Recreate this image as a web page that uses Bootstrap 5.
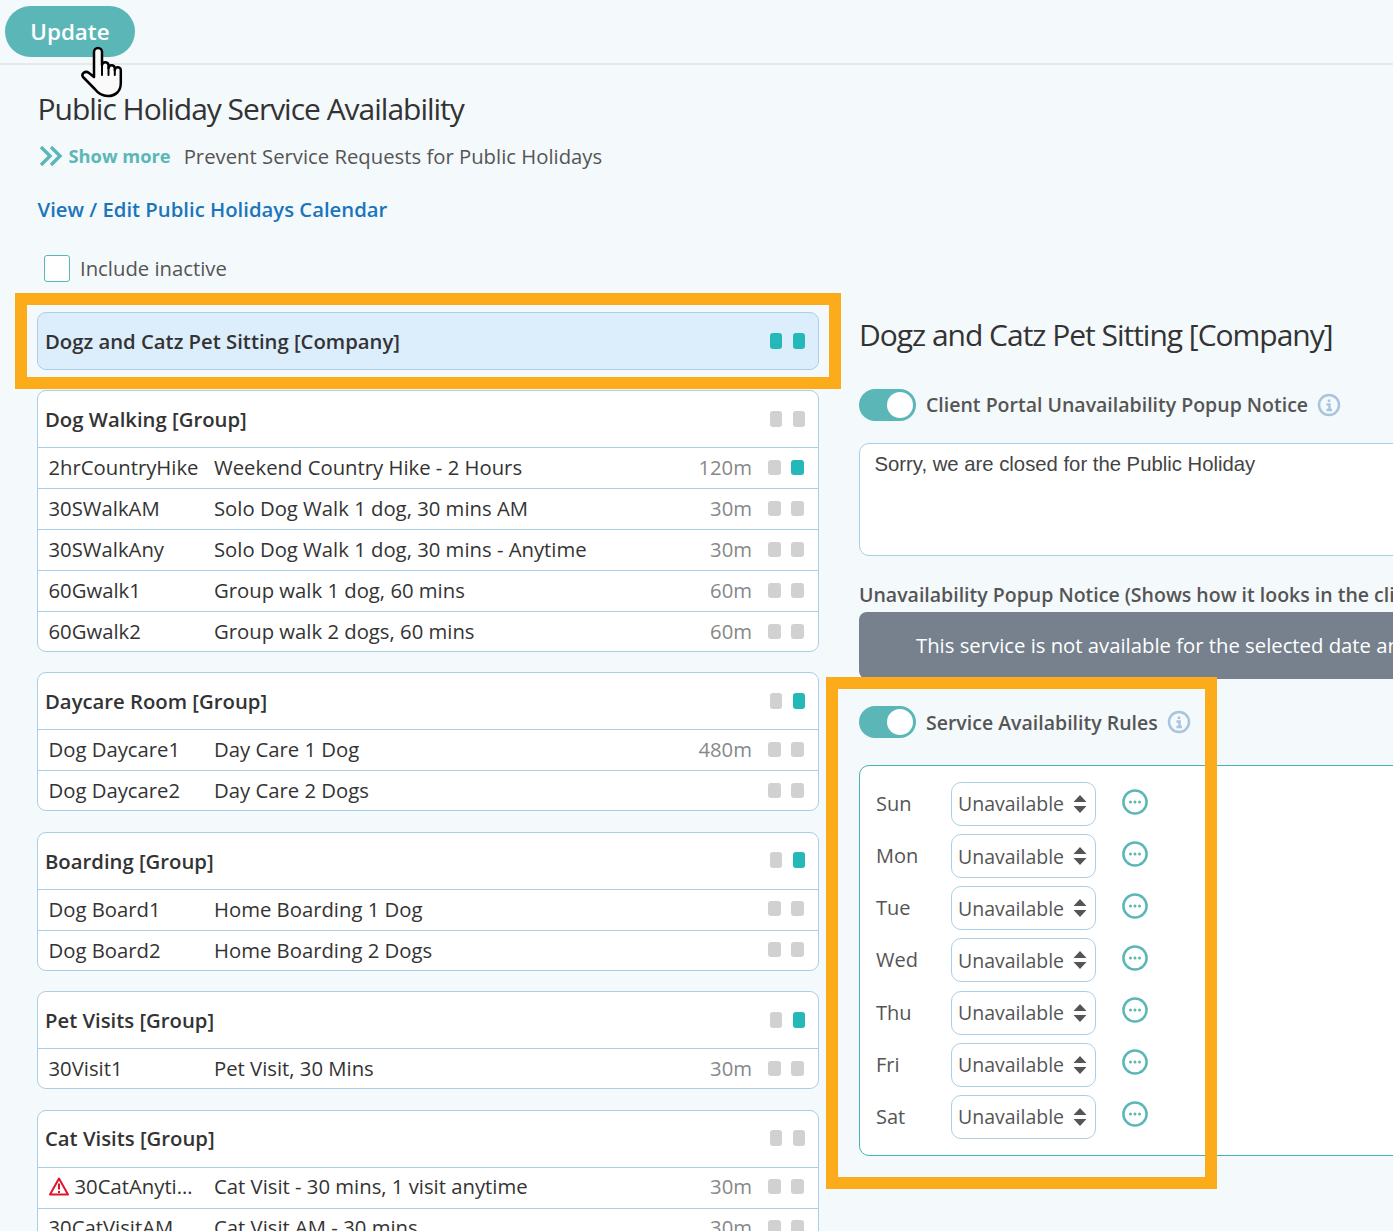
<!DOCTYPE html>
<html lang="en"><head><meta charset="utf-8"><title>Public Holiday Service Availability</title>
<link href="https://cdn.jsdelivr.net/npm/bootstrap@5.3.0/dist/css/bootstrap.min.css" rel="stylesheet">
<style>
html,body{height:1231px;overflow:hidden}
body{background:#f4f9fc;font-family:"Open Sans",sans-serif;font-size:20.3px;color:#555;position:relative}
.topbar{height:65px;border-bottom:2px solid #e6e8ea;padding:6px 5px 0}
.btn-update{width:130px;height:51px;border-radius:26px;background:#5bb7b7;border:0;color:#fff;font-size:22.4px;font-weight:600;padding:1px 0 0}
.btn-update:hover{background:#5bb7b7;color:#fff}
.page-wrap{padding:26px 0 0 38px}
.title-h{font-size:30px;line-height:36px;font-weight:400;letter-spacing:-1.01px;color:#333;margin:0 0 0 -.5px}
.show-row{margin-top:14px;line-height:30px;height:30px}
.show-ic{margin:0 0 0 1px}
.show-link{color:#5bb7b7;font-weight:700;font-size:18.3px;text-decoration:none;margin-left:5.5px;margin-right:13px}
.cal-link{display:block;margin-top:23px;line-height:30px;color:#1b75bb;font-weight:600;text-decoration:none;margin-left:-.5px}
.inc-row{margin:29px 0 0 6px;height:30px;line-height:30px}
.inc-row .form-check-input{width:26px;height:27px;margin:0 10px 0 0;border-radius:3px;border:1px solid #5bb7b7;float:none}
.cols{margin-top:29px;margin-left:-1px}
.left-col{width:782px;flex:none}
.right-col{width:800px;flex:none;margin-left:40px}
.svc-card{margin-bottom:20.4px;border:1px solid #a9cfe8;border-radius:9px;background:#fff;color:#333;overflow:hidden}
.svc-card.active-card{background:#dcedfc;height:58px;margin-bottom:20px}
.svc-card>.list-group{border-top:0;margin-bottom:-1px}
.svc-head{height:56px;padding:0 13px 0 7px;font-weight:600;background:transparent;border:0}
.svc-head .sq{margin-top:-1px}
.list-group-flush>.svc-row,.list-group-flush>.svc-row:last-child{height:41px;padding:0 14px 2px 10.500px;border-width:1px 0 0;border-style:solid;border-color:#a9cfe8;background:transparent;color:#333}
.code-c{width:165.500px;flex:none;padding-right:6px}
.warn-code{padding-right:20px}
.name-c{flex:1}
.dur-c{color:#888;margin-right:16px}
.sq{display:block;border-radius:3px;background:#d1d1d1}
.svc-row .sq{width:13px;height:15px;margin-top:0}
.svc-row .sq+.sq{margin-left:10px}
.svc-head .sq{width:12px;height:16px}
.svc-head .sq+.sq{margin-left:11px}
.sq.on{background:#24b8b8}
.warn-ic{width:20px;height:19px;margin-right:6px;flex:none}
.right-title{font-size:30px;line-height:36px;letter-spacing:-1.01px;font-weight:400;color:#333;margin:5px 0 36px}
.tog-row{height:32px}
.tog-row .form-check-input{width:57px;height:32px;margin:0 10px 0 0;border:0;background-color:#5bb7b7;float:none;border-radius:16px;
background-image:url("data:image/svg+xml,%3csvg xmlns='http://www.w3.org/2000/svg' viewBox='-4 -4 8 8'%3e%3ccircle r='3.25' fill='%23fff'/%3e%3c/svg%3e")}
.tog-row.form-switch{padding:0}
.tog-label{font-weight:600;color:#555;font-size:19.5px}
.tog-two .tog-label{padding-top:1px}
.info-ic{width:24px;height:24px;margin-left:9px;flex:none}
.notice-input{margin-top:22px;height:113px;border:1px solid #a9cfe8;border-radius:10px;font-family:"Liberation Sans",sans-serif;font-size:20.3px;line-height:24px;color:#444;padding:8px 14.5px 0;background:#fff;resize:none}
.prev-label{margin-top:25px;line-height:28px;font-weight:600;color:#555;white-space:nowrap;font-size:19.5px}
.notice-bar{margin-top:3px;height:67px;background:#76818d;color:#fff;border-radius:8px;padding:0 0 0 57px;white-space:nowrap}
.tog-two{margin-top:27px}
.rules-card{margin-top:27px;height:391px;border:1px solid #47b3b3;border-radius:10px;background:#fff;padding:16px 16px;gap:8.170px}
.day-c{width:75px;color:#555;font-size:20px;padding-top:0}
.rules-card .form-select{width:145px;height:44px;flex:none;border:1px solid #a9cfe8;border-radius:10px;color:#555;font-family:"Open Sans",sans-serif;font-size:19.500px;padding:0 24px 0 6px;
background-color:#fff;background-size:14px 20px;background-position:right 8px center;
background-image:url("data:image/svg+xml,%3csvg xmlns='http://www.w3.org/2000/svg' viewBox='0 0 14 20'%3e%3cpath fill='%23555' d='M7 1l6.500 7H.5zM7 19l6.500-7H.5z'/%3e%3c/svg%3e")}
.more-ic{width:26px;height:26px;margin:-5px 0 0 26px;flex:none}
.hl-box{position:absolute;border:12px solid #fcac1b;pointer-events:none}
.hl-a{left:15px;top:293px;width:826px;height:96px}
.hl-b{left:826px;top:677px;width:391px;height:512px}
.hand-cur{position:absolute;left:81px;top:46px;width:42px;height:52px}
</style></head><body>
<div class="topbar"><button class="btn btn-update" type="button">Update</button></div>
<div class="page-wrap">
<h2 class="title-h">Public Holiday Service Availability</h2>
<div class="show-row d-flex align-items-center">
<svg class="show-ic" width="24" height="22" viewBox="0 0 24 22" fill="none" stroke="#5bb7b7" stroke-width="3.400"><path d="M2 2l9 9-9 9M12 2l9 9-9 9"/></svg>
<a class="show-link" href="#">Show more</a><span>Prevent Service Requests for Public Holidays</span></div>
<a class="cal-link" href="#">View / Edit Public Holidays Calendar</a>
<div class="inc-row d-flex align-items-center"><input class="form-check-input" type="checkbox" id="inc"><label for="inc">Include inactive</label></div>
<div class="cols d-flex">
<div class="left-col">
<div class="card svc-card active-card"><div class="svc-head d-flex align-items-center"><span class="flex-grow-1">Dogz and Catz Pet Sitting [Company]</span><i class="sq on"></i><i class="sq on"></i></div></div>

<div class="card svc-card"><div class="svc-head d-flex align-items-center"><span class="flex-grow-1">Dog Walking [Group]</span><i class="sq"></i><i class="sq"></i></div>
<div class="list-group list-group-flush">
<div class="list-group-item svc-row d-flex align-items-center"><span class="code-c text-truncate">2hrCountryHike</span><span class="name-c">Weekend Country Hike - 2 Hours</span><span class="dur-c">120m</span><i class="sq"></i><i class="sq on"></i></div>
<div class="list-group-item svc-row d-flex align-items-center"><span class="code-c text-truncate">30SWalkAM</span><span class="name-c">Solo Dog Walk 1 dog, 30 mins AM</span><span class="dur-c">30m</span><i class="sq"></i><i class="sq"></i></div>
<div class="list-group-item svc-row d-flex align-items-center"><span class="code-c text-truncate">30SWalkAny</span><span class="name-c">Solo Dog Walk 1 dog, 30 mins - Anytime</span><span class="dur-c">30m</span><i class="sq"></i><i class="sq"></i></div>
<div class="list-group-item svc-row d-flex align-items-center"><span class="code-c text-truncate">60Gwalk1</span><span class="name-c">Group walk 1 dog, 60 mins</span><span class="dur-c">60m</span><i class="sq"></i><i class="sq"></i></div>
<div class="list-group-item svc-row d-flex align-items-center"><span class="code-c text-truncate">60Gwalk2</span><span class="name-c">Group walk 2 dogs, 60 mins</span><span class="dur-c">60m</span><i class="sq"></i><i class="sq"></i></div>
</div></div>

<div class="card svc-card"><div class="svc-head d-flex align-items-center"><span class="flex-grow-1">Daycare Room [Group]</span><i class="sq"></i><i class="sq on"></i></div>
<div class="list-group list-group-flush">
<div class="list-group-item svc-row d-flex align-items-center"><span class="code-c text-truncate">Dog Daycare1</span><span class="name-c">Day Care 1 Dog</span><span class="dur-c">480m</span><i class="sq"></i><i class="sq"></i></div>
<div class="list-group-item svc-row d-flex align-items-center"><span class="code-c text-truncate">Dog Daycare2</span><span class="name-c">Day Care 2 Dogs</span><i class="sq"></i><i class="sq"></i></div>
</div></div>

<div class="card svc-card"><div class="svc-head d-flex align-items-center"><span class="flex-grow-1">Boarding [Group]</span><i class="sq"></i><i class="sq on"></i></div>
<div class="list-group list-group-flush">
<div class="list-group-item svc-row d-flex align-items-center"><span class="code-c text-truncate">Dog Board1</span><span class="name-c">Home Boarding 1 Dog</span><i class="sq"></i><i class="sq"></i></div>
<div class="list-group-item svc-row d-flex align-items-center"><span class="code-c text-truncate">Dog Board2</span><span class="name-c">Home Boarding 2 Dogs</span><i class="sq"></i><i class="sq"></i></div>
</div></div>

<div class="card svc-card"><div class="svc-head d-flex align-items-center"><span class="flex-grow-1">Pet Visits [Group]</span><i class="sq"></i><i class="sq on"></i></div>
<div class="list-group list-group-flush">
<div class="list-group-item svc-row d-flex align-items-center"><span class="code-c text-truncate">30Visit1</span><span class="name-c">Pet Visit, 30 Mins</span><span class="dur-c">30m</span><i class="sq"></i><i class="sq"></i></div>
</div></div>

<div class="card svc-card"><div class="svc-head d-flex align-items-center"><span class="flex-grow-1">Cat Visits [Group]</span><i class="sq"></i><i class="sq"></i></div>
<div class="list-group list-group-flush">
<div class="list-group-item svc-row d-flex align-items-center"><span class="code-c warn-code d-flex align-items-center"><svg class="warn-ic" viewBox="0 0 20 19" fill="none"><path d="M10 1.500L1 17.500h18z" stroke="#e0142b" stroke-width="2" stroke-linejoin="round"/><path d="M10 6.500v6M10 14v2" stroke="#e0142b" stroke-width="2"/></svg><span class="text-truncate">30CatAnytime</span></span><span class="name-c">Cat Visit - 30 mins, 1 visit anytime</span><span class="dur-c">30m</span><i class="sq"></i><i class="sq"></i></div>
<div class="list-group-item svc-row d-flex align-items-center"><span class="code-c text-truncate">30CatVisitAM</span><span class="name-c">Cat Visit AM - 30 mins</span><span class="dur-c">30m</span><i class="sq"></i><i class="sq"></i></div>
</div></div>
</div>

<div class="right-col">
<h2 class="right-title">Dogz and Catz Pet Sitting [Company]</h2>
<div class="tog-row form-check form-switch d-flex align-items-center"><input class="form-check-input" type="checkbox" checked><span class="tog-label">Client Portal Unavailability Popup Notice</span>
<svg class="info-ic" viewBox="0 0 24 24" fill="none" stroke="#a9c4dc" stroke-width="2.500"><circle cx="12" cy="12" r="10"/><path d="M12 6.500v2.500M9.500 11.500H12.500V17M9.500 17h5.500"/></svg></div>
<textarea class="form-control notice-input" rows="3">Sorry, we are closed for the Public Holiday</textarea>
<div class="prev-label">Unavailability Popup Notice (Shows how it looks in the client portal)</div>
<div class="notice-bar d-flex align-items-center">This service is not available for the selected date and time</div>
<div class="tog-row tog-two form-check form-switch d-flex align-items-center"><input class="form-check-input" type="checkbox" checked><span class="tog-label">Service Availability Rules</span>
<svg class="info-ic" viewBox="0 0 24 24" fill="none" stroke="#a9c4dc" stroke-width="2.500"><circle cx="12" cy="12" r="10"/><path d="M12 6.500v2.500M9.500 11.500H12.500V17M9.500 17h5.500"/></svg></div>
<div class="rules-card d-flex flex-column">
<div class="d-flex align-items-center"><span class="day-c">Sun</span><select class="form-select"><option>Unavailable</option></select><svg class="more-ic" viewBox="0 0 26 26"><circle cx="13" cy="13" r="11.600" fill="none" stroke="#5bb7b7" stroke-width="2.500"/><circle cx="8.500" cy="13" r="1.500" fill="#5bb7b7"/><circle cx="13" cy="13" r="1.500" fill="#5bb7b7"/><circle cx="17.500" cy="13" r="1.500" fill="#5bb7b7"/></svg></div>
<div class="d-flex align-items-center"><span class="day-c">Mon</span><select class="form-select"><option>Unavailable</option></select><svg class="more-ic" viewBox="0 0 26 26"><circle cx="13" cy="13" r="11.600" fill="none" stroke="#5bb7b7" stroke-width="2.500"/><circle cx="8.500" cy="13" r="1.500" fill="#5bb7b7"/><circle cx="13" cy="13" r="1.500" fill="#5bb7b7"/><circle cx="17.500" cy="13" r="1.500" fill="#5bb7b7"/></svg></div>
<div class="d-flex align-items-center"><span class="day-c">Tue</span><select class="form-select"><option>Unavailable</option></select><svg class="more-ic" viewBox="0 0 26 26"><circle cx="13" cy="13" r="11.600" fill="none" stroke="#5bb7b7" stroke-width="2.500"/><circle cx="8.500" cy="13" r="1.500" fill="#5bb7b7"/><circle cx="13" cy="13" r="1.500" fill="#5bb7b7"/><circle cx="17.500" cy="13" r="1.500" fill="#5bb7b7"/></svg></div>
<div class="d-flex align-items-center"><span class="day-c">Wed</span><select class="form-select"><option>Unavailable</option></select><svg class="more-ic" viewBox="0 0 26 26"><circle cx="13" cy="13" r="11.600" fill="none" stroke="#5bb7b7" stroke-width="2.500"/><circle cx="8.500" cy="13" r="1.500" fill="#5bb7b7"/><circle cx="13" cy="13" r="1.500" fill="#5bb7b7"/><circle cx="17.500" cy="13" r="1.500" fill="#5bb7b7"/></svg></div>
<div class="d-flex align-items-center"><span class="day-c">Thu</span><select class="form-select"><option>Unavailable</option></select><svg class="more-ic" viewBox="0 0 26 26"><circle cx="13" cy="13" r="11.600" fill="none" stroke="#5bb7b7" stroke-width="2.500"/><circle cx="8.500" cy="13" r="1.500" fill="#5bb7b7"/><circle cx="13" cy="13" r="1.500" fill="#5bb7b7"/><circle cx="17.500" cy="13" r="1.500" fill="#5bb7b7"/></svg></div>
<div class="d-flex align-items-center"><span class="day-c">Fri</span><select class="form-select"><option>Unavailable</option></select><svg class="more-ic" viewBox="0 0 26 26"><circle cx="13" cy="13" r="11.600" fill="none" stroke="#5bb7b7" stroke-width="2.500"/><circle cx="8.500" cy="13" r="1.500" fill="#5bb7b7"/><circle cx="13" cy="13" r="1.500" fill="#5bb7b7"/><circle cx="17.500" cy="13" r="1.500" fill="#5bb7b7"/></svg></div>
<div class="d-flex align-items-center"><span class="day-c">Sat</span><select class="form-select"><option>Unavailable</option></select><svg class="more-ic" viewBox="0 0 26 26"><circle cx="13" cy="13" r="11.600" fill="none" stroke="#5bb7b7" stroke-width="2.500"/><circle cx="8.500" cy="13" r="1.500" fill="#5bb7b7"/><circle cx="13" cy="13" r="1.500" fill="#5bb7b7"/><circle cx="17.500" cy="13" r="1.500" fill="#5bb7b7"/></svg></div>
</div>
</div>
</div>
</div>
<div class="hl-box hl-a"></div>
<div class="hl-box hl-b"></div>
<svg class="hand-cur" viewBox="0 0 42 52" fill="#fafafa" stroke="#000" stroke-width="2.500" stroke-linejoin="round" stroke-linecap="round"><path d="M13 31V6a4 4 0 0 1 8 0V19a3.300 3.300 0 0 1 6.500 0v3a3.200 3.200 0 0 1 6.300 0v2a3 3 0 0 1 6 .5V37c0 8-5 13-13 13-6 0-10-3-13-7L2 31c-2-3 2-7 6-4z"/><path d="M21 19v10M27.500 22v7M33.800 24v5" fill="none" stroke-width="2"/></svg>
</body></html>
